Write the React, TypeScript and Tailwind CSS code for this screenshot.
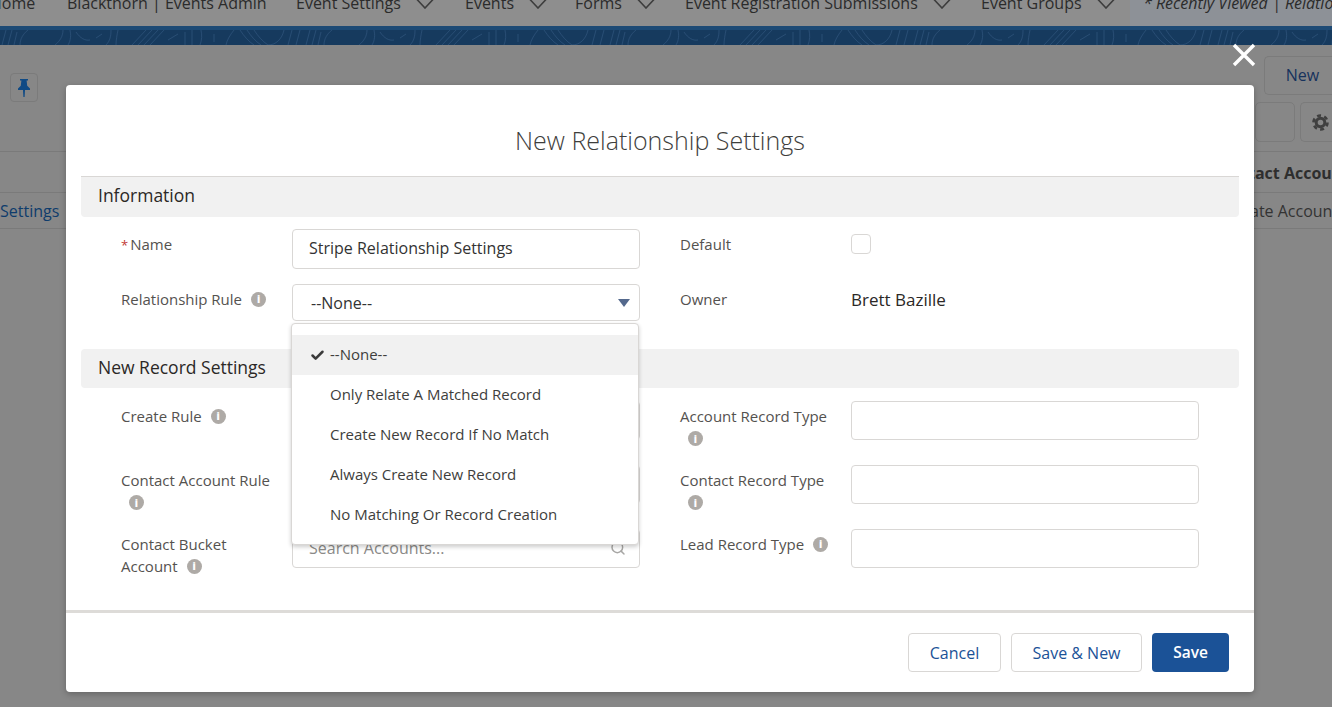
import { Check, Search } from "lucide-react";

const FONT = "[font-family:'Open_Sans',Lato,sans-serif]";

const NAV = [
  { label: "Blackthorn | Events Admin", w: "w-[229px]", menu: false },
  { label: "Event Settings", menu: true, w: "w-[169px]" },
  { label: "Events", menu: true, w: "w-[110px]" },
  { label: "Forms", menu: true, w: "w-[110px]" },
  { label: "Event Registration Submissions", menu: true, w: "w-[296px]" },
  { label: "Event Groups", menu: true, w: "w-[149px]" }
];

const OPTIONS = [
  "--None--",
  "Only Relate A Matched Record",
  "Create New Record If No Match",
  "Always Create New Record",
  "No Matching Or Record Creation"
];

function InfoDot({ className = "" }: { className?: string }) {
  return (
    <span
      className={`inline-flex h-[15px] w-[15px] items-center justify-center rounded-full bg-[#aeaaa6] align-middle text-[10px] font-extrabold leading-none text-white ${className}`}
    >
      i
    </span>
  );
}

function Band() {
  return (
    <svg className="block h-[15px] w-full" aria-hidden>
      <defs>
        <pattern id="grain" width="304" height="15" patternUnits="userSpaceOnUse">
          <g fill="none" stroke="#2f557c" strokeWidth="0.7">
            <path d="M2 15 6 0M8 15 12 0M14 15 17 2M20 15c0-6 3-11 8-15" />
            <path d="M55 15c5-4 8-9 8-15M68 15c3-5 3-10 2-15M76 2c4 6 9 9 14 8M96 8l6-4M106 15c4-4 5-9 5-15M116 15c0-5 1-10 2-15" />
            <path d="M132 15 146 0M138 15 152 0M144 15 158 0M150 15 164 0M168 10l10-6M185 15V2M192 15V0M200 15c2-5 2-10 1-15M214 4v8M226 15c1-5 4-10 8-15" />
            <path d="M240 0c4 6 8 11 14 15M247 0c4 6 8 11 14 15M254 0c4 6 8 11 14 15M268 15c8 0 14-6 16-15M288 15l4-15M296 15l4-15" />
          </g>
        </pattern>
      </defs>
      <rect width="100%" height="15" fill="#163a5e" />
      <rect width="100%" height="15" fill="url(#grain)" />
    </svg>
  );
}

function Field({
  label,
  required,
  info,
  infoBelow,
  children,
  className
}: {
  label: string;
  required?: boolean;
  info?: boolean;
  infoBelow?: boolean;
  children?: React.ReactNode;
  className: string;
}) {
  return (
    <div className={`flex items-start ${className}`}>
      <div className="w-[171px] shrink-0 pr-[12px] pt-[4px] text-[15px] leading-[22px] text-[#54524f]">
        {required && <span className="mr-[2px] text-[13px] text-[#c23934]">*</span>}
        {label}
        {info && !infoBelow && <InfoDot className="ml-[9px] -mt-[3px]" />}
        {infoBelow && (
          <div className="pl-[8px] leading-[22px]">
            <InfoDot className="-mt-[2px]" />
          </div>
        )}
      </div>
      {children}
    </div>
  );
}

function TextBox({ children, className = "h-[39px] w-[348px]" }: { children?: React.ReactNode; className?: string }) {
  return (
    <div
      className={`flex shrink-0 items-center rounded-[4px] border border-[#d9d7d5] bg-white px-4 text-[16px] ${className}`}
    >
      {children}
    </div>
  );
}

export default function App() {
  return (
    <div className={`relative h-[707px] w-[1332px] overflow-hidden bg-[#878787] ${FONT}`}>
      {/* page behind the dimmer */}
      <nav className="flex h-[26px] items-end overflow-hidden bg-[#8e8e8e] pb-[10px] text-[16px] leading-[26px] text-[#2b2b2b]">
        <span className="w-[67px] shrink-0 overflow-hidden whitespace-nowrap">
          <span className="-ml-[10px] inline-block">Home</span>
        </span>
        {NAV.map((n) => (
          <span key={n.label} className={`${n.w} flex shrink-0 items-center gap-[15px] whitespace-nowrap`}>
            {n.label}
            {n.menu && (
              <svg width="18" height="10" viewBox="0 0 18 10" fill="none" stroke="#3d3d3d" strokeWidth="1.6" className="mt-[1px]" aria-hidden>
                <path d="M1 .5 9 9l8-8.500" />
              </svg>
            )}
          </span>
        ))}
        <span className="-mb-[10px] flex h-[26px] flex-1 items-end overflow-hidden whitespace-nowrap bg-[#8d9197] pb-[10px] pl-[13px] italic">
          * Recently Viewed | Relationship Settings
        </span>
      </nav>
      <div className="h-1 bg-[#1d4a75]" />
      <Band />
      <div className="flex h-[107px] items-start justify-between border-b border-[#7a7a7a] pl-[10px]">
        <button className="mt-[28px] flex h-[29px] w-[28px] items-center justify-center rounded-[4px] border border-[#7b7b7b]">
          <svg width="12" height="18" viewBox="0 0 12 18" aria-hidden>
            <path d="M2 0h8v1.500H8.600l.6 5.200L12 9.600V11H7l-.4 7h-1.200L5 11H0V9.600l2.800-2.900.6-5.200H2z" fill="#0f4a85" />
          </svg>
        </button>
        <div className="flex flex-col items-end pt-[11px]">
          <button className="h-[39px] w-[68px] rounded-l-[5px] border border-r-0 border-[#7b7b7b] pb-[2px] pl-[8px] text-[16px] text-[#16325c]">New</button>
          <div className="mt-[7px] flex gap-[5px]">
            <span className="h-[40px] w-[40px] rounded-[5px] border border-[#7b7b7b]" />
            <span className="flex h-[40px] w-[32px] items-center rounded-l-[5px] border border-r-0 border-[#7b7b7b] pl-[11px]">
              <svg width="17" height="17" viewBox="0 0 17 17" fill="none" stroke="#3f3f3f" aria-hidden>
                <circle cx="8.500" cy="8.500" r="4.300" strokeWidth="3" />
                <circle cx="8.500" cy="8.500" r="7" strokeWidth="2.600" strokeDasharray="4 3.330" />
              </svg>
            </span>
          </div>
        </div>
      </div>
      <div className="flex h-[41px] items-center justify-end border-b border-[#7a7a7a] pt-[2px] text-[16px] font-bold text-[#2e2e2e]">
        <span className="w-[84px] overflow-hidden whitespace-nowrap">tact Account</span>
      </div>
      <div className="flex h-[36px] items-center justify-between border-b border-[#7a7a7a] text-[16px] text-[#0e3c6c]">
        <span>Settings</span>
        <span className="w-[82px] overflow-hidden whitespace-nowrap text-[#333]">ate Account</span>
      </div>

      {/* close */}
      <button className="absolute left-[1232px] top-[43px]">
        <svg width="24" height="24" viewBox="0 0 24 24" fill="none" stroke="#fff" strokeWidth="3.400" aria-hidden>
          <path d="M2 2l20 20M22 2 2 22" />
        </svg>
      </button>

      {/* modal */}
      <section className="absolute left-[66px] top-[85px] flex h-[607px] w-[1188px] flex-col rounded-[4px] bg-white shadow-[0_2px_6px_rgba(0,0,0,0.25)]">
        <div className="flex-1 px-[15px]">
          <h2 className="h-[91px] pt-[37px] text-center text-[25px] font-light leading-[36px] text-[#3e3e3c]">
            New Relationship Settings
          </h2>
          <h3 className="flex h-[41px] items-center rounded-b-[4px] border-t border-[#d9d7d5] bg-[#f1f1f1] pb-[3px] pl-[17px] text-[17.500px] text-[#2b2826]">
            Information
          </h3>
          <div className="mt-[12px] flex pl-[40px]">
            <div className="flex w-[559px] flex-col">
              <Field label="Name" required className="h-[55px]">
                <TextBox className="h-[40px] w-[348px] pb-[2px] text-[16.200px] text-[#333]">Stripe Relationship Settings</TextBox>
              </Field>
              <Field label="Relationship Rule" info className="h-[65px]">
                <div className="relative">
                  <TextBox className="h-[37px] w-[348px] justify-between !pl-[18px] !pr-[9px] text-[#333]">
                    --None--
                    <svg width="12" height="8" viewBox="0 0 12 8" aria-hidden>
                      <path d="M0 0h12L6 8z" fill="#54698d" />
                    </svg>
                  </TextBox>
                  <ul className="absolute left-[-1px] top-[39px] z-10 h-[222px] w-[348px] rounded-[4px] border border-[#d9d7d5] bg-white py-[11px] text-[15px] text-[#3e3e3c] shadow-[0_2px_4px_rgba(0,0,0,0.2)]">
                    {OPTIONS.map((o, i) => (
                      <li
                        key={o}
                        className={`relative flex h-[40px] items-center pb-[2px] pl-[38px] ${i === 0 ? "bg-[#f1f1f1]" : ""}`}
                      >
                        {i === 0 && (
                          <Check size={15} strokeWidth={4} className="absolute left-[18px] top-[13px] text-[#3a3a3a]" />
                        )}
                        {o}
                      </li>
                    ))}
                  </ul>
                </div>
              </Field>
            </div>
            <div className="flex flex-col">
              <Field label="Default" className="h-[55px]">
                <span className="mt-[5px] h-[20px] w-[20px] rounded-[4px] border border-[#d9d7d5] bg-white" />
              </Field>
              <Field label="Owner" className="h-[65px]">
                <span className="pt-[5px] text-[17px] leading-[22px] text-[#2b2826]">Brett Bazille</span>
              </Field>
            </div>
          </div>
          <h3 className="flex h-[39px] items-center rounded-[4px] bg-[#f1f1f1] pb-[2px] pl-[17px] text-[17.500px] text-[#2b2826]">
            New Record Settings
          </h3>
          <div className="mt-[13px] flex pl-[40px]">
            <div className="flex w-[559px] flex-col">
              <Field label="Create Rule" info className="h-[64px]">
                <TextBox />
              </Field>
              <Field label="Contact Account Rule" infoBelow className="h-[64px]">
                <TextBox />
              </Field>
              <Field label="Contact Bucket Account" info className="h-[64px] [&>div]:pr-[60px]">
                <TextBox className="h-[39px] w-[348px] justify-between pb-[1px] !pr-[13px] text-[#8b8a88]">
                  Search Accounts...
                  <Search size={16} strokeWidth={2.2} className="text-[#a8a7a5]" />
                </TextBox>
              </Field>
            </div>
            <div className="flex flex-col">
              <Field label="Account Record Type" infoBelow className="h-[64px]">
                <TextBox />
              </Field>
              <Field label="Contact Record Type" infoBelow className="h-[64px]">
                <TextBox />
              </Field>
              <Field label="Lead Record Type" info className="h-[64px]">
                <TextBox />
              </Field>
            </div>
          </div>
        </div>
        <footer className="flex h-[82px] items-start justify-end gap-[10px] border-t-[3px] border-[#dddbd8] pr-[25px] pt-[20px] text-[16px]">
          <button className="h-[39px] w-[93px] rounded-[4px] border border-[#d9d7d5] text-[#1b5297]">Cancel</button>
          <button className="h-[39px] w-[131px] rounded-[4px] border border-[#d9d7d5] text-[#1b5297]">Save &amp; New</button>
          <button className="h-[39px] w-[77px] rounded-[4px] bg-[#1b5297] text-[15.500px] font-semibold text-white">Save</button>
        </footer>
      </section>
    </div>
  );
}
